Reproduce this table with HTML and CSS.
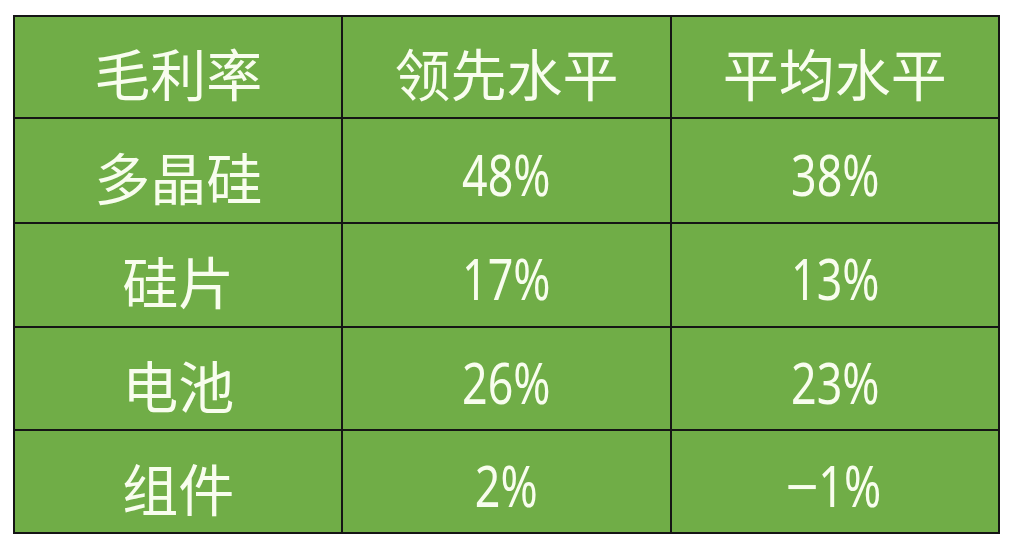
FILE: index.html
```html
<!DOCTYPE html>
<html lang="zh">
<head>
<meta charset="utf-8">
<title>毛利率</title>
<link rel="stylesheet" href="styles.css">
</head>
<body>
<div class="grid">
  <div class="cell">毛利率</div><div class="cell">领先水平</div><div class="cell">平均水平</div>
  <div class="cell">多晶硅</div><div class="cell"><span class="num">48%</span></div><div class="cell"><span class="num">38%</span></div>
  <div class="cell">硅片</div><div class="cell"><span class="num">17%</span></div><div class="cell"><span class="num">13%</span></div>
  <div class="cell">电池</div><div class="cell"><span class="num">26%</span></div><div class="cell"><span class="num">23%</span></div>
  <div class="cell">组件</div><div class="cell"><span class="num">2%</span></div><div class="cell"><span class="num"><span class="minus">−</span>1%</span></div>
</div>
</body>
</html>
```
FILE: styles.css
```css
html, body {
  margin: 0;
  background: #ffffff;
}
body {
  padding: 15px 0 0 13px;
}
.grid {
  display: grid;
  grid-template-columns: repeat(3, 1fr);
  grid-template-rows: 100px 103px 102px 101px 101px;
  gap: 2px;
  padding: 2px;
  width: 983px;
  background: #151515;
}
.cell {
  display: flex;
  align-items: center;
  justify-content: center;
  padding-top: 10px;
  box-sizing: border-box;
  background: #70ad47;
  color: #f8fdee;
  font-family: "Noto Sans CJK SC", "Noto Sans", sans-serif;
  font-size: 56px;
  line-height: 1;
}
.num {
  display: inline-block;
  font-family: "Noto Sans", "Noto Sans CJK SC", sans-serif;
  transform: translateY(-2px) scaleX(0.8);
}
.minus {
  display: inline-block;
  transform: scaleX(1.3);
  margin-right: 4px;
}
```
